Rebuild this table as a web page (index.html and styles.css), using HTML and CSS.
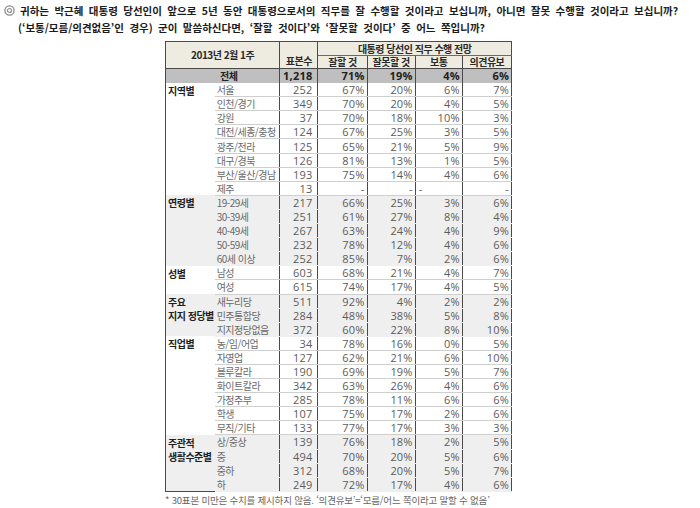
FILE: index.html
```html
<!DOCTYPE html>
<html lang="ko">
<head>
<meta charset="utf-8">
<title>대통령 당선인 직무 수행 전망</title>
<link rel="stylesheet" href="styles.css">
</head>
<body>
<div class="q">
  <div class="q-line">
    <svg class="bullet" width="11" height="11" viewBox="0 0 11 11"><circle cx="5.5" cy="5.5" r="4.6" fill="none" stroke="#8a8a8a" stroke-width="1.3"/><circle cx="5.5" cy="5.5" r="2" fill="none" stroke="#8a8a8a" stroke-width="1.2"/></svg>
    <span>귀하는 박근혜 대통령 당선인이 앞으로 5년 동안 대통령으로서의 직무를 잘 수행할 것이라고 보십니까, 아니면 잘못 수행할 것이라고 보십니까?</span>
  </div>
  <div class="q-line q-line2">(‘보통/모름/의견없음’인 경우) 군이 말씀하신다면, ‘잘할 것이다’와 ‘잘못할 것이다’ 중 어느 쪽입니까?</div>
</div>

<table class="survey">
  <colgroup>
    <col class="c-cat"><col class="c-sub"><col class="c-n"><col class="c-p"><col class="c-p2"><col class="c-p3"><col class="c-p">
  </colgroup>
  <thead>
    <tr class="h1">
      <th colspan="2" rowspan="2" class="h-date">2013년 2월 1주</th>
      <th rowspan="2" class="h-n">표본수</th>
      <th colspan="4" class="h-grp">대통령 당선인 직무 수행 전망</th>
    </tr>
    <tr class="h2">
      <th class="h-p">잘할 것</th><th class="h-p">잘못할 것</th><th class="h-p">보통</th><th class="h-p">의견유보</th>
    </tr>
  </thead>
  <tbody class="tot">
    <tr><td colspan="2" class="tot-l">전체</td><td class="n">1,218</td><td class="p">71%</td><td class="p">19%</td><td class="p">4%</td><td class="p">6%</td></tr>
  </tbody>
  <tbody class="g w">
    <tr><td rowspan="8" class="cat">지역별</td><td class="sub">서울</td><td class="n">252</td><td class="p">67%</td><td class="p">20%</td><td class="p">6%</td><td class="p">7%</td></tr>
    <tr><td class="sub">인천/경기</td><td class="n">349</td><td class="p">70%</td><td class="p">20%</td><td class="p">4%</td><td class="p">5%</td></tr>
    <tr><td class="sub">강원</td><td class="n">37</td><td class="p">70%</td><td class="p">18%</td><td class="p">10%</td><td class="p">3%</td></tr>
    <tr><td class="sub">대전/세종/충청</td><td class="n">124</td><td class="p">67%</td><td class="p">25%</td><td class="p">3%</td><td class="p">5%</td></tr>
    <tr><td class="sub">광주/전라</td><td class="n">125</td><td class="p">65%</td><td class="p">21%</td><td class="p">5%</td><td class="p">9%</td></tr>
    <tr><td class="sub">대구/경북</td><td class="n">126</td><td class="p">81%</td><td class="p">13%</td><td class="p">1%</td><td class="p">5%</td></tr>
    <tr><td class="sub">부산/울산/경남</td><td class="n">193</td><td class="p">75%</td><td class="p">14%</td><td class="p">4%</td><td class="p">6%</td></tr>
    <tr><td class="sub">제주</td><td class="n">13</td><td class="p">-</td><td class="p">-</td><td class="p pl">-</td><td class="p">-</td></tr>
  </tbody>
  <tbody class="g gr">
    <tr><td rowspan="5" class="cat">연령별</td><td class="sub">19-29세</td><td class="n">217</td><td class="p">66%</td><td class="p">25%</td><td class="p">3%</td><td class="p">6%</td></tr>
    <tr><td class="sub">30-39세</td><td class="n">251</td><td class="p">61%</td><td class="p">27%</td><td class="p">8%</td><td class="p">4%</td></tr>
    <tr><td class="sub">40-49세</td><td class="n">267</td><td class="p">63%</td><td class="p">24%</td><td class="p">4%</td><td class="p">9%</td></tr>
    <tr><td class="sub">50-59세</td><td class="n">232</td><td class="p">78%</td><td class="p">12%</td><td class="p">4%</td><td class="p">6%</td></tr>
    <tr><td class="sub">60세 이상</td><td class="n">252</td><td class="p">85%</td><td class="p">7%</td><td class="p">2%</td><td class="p">6%</td></tr>
  </tbody>
  <tbody class="g w">
    <tr><td rowspan="2" class="cat">성별</td><td class="sub">남성</td><td class="n">603</td><td class="p">68%</td><td class="p">21%</td><td class="p">4%</td><td class="p">7%</td></tr>
    <tr><td class="sub">여성</td><td class="n">615</td><td class="p">74%</td><td class="p">17%</td><td class="p">4%</td><td class="p">5%</td></tr>
  </tbody>
  <tbody class="g gr">
    <tr><td rowspan="3" class="cat">주요<br>지지 정당별</td><td class="sub">새누리당</td><td class="n">511</td><td class="p">92%</td><td class="p">4%</td><td class="p">2%</td><td class="p">2%</td></tr>
    <tr><td class="sub">민주통합당</td><td class="n">284</td><td class="p">48%</td><td class="p">38%</td><td class="p">5%</td><td class="p">8%</td></tr>
    <tr><td class="sub">지지정당없음</td><td class="n">372</td><td class="p">60%</td><td class="p">22%</td><td class="p">8%</td><td class="p">10%</td></tr>
  </tbody>
  <tbody class="g w">
    <tr><td rowspan="7" class="cat">직업별</td><td class="sub">농/임/어업</td><td class="n">34</td><td class="p">78%</td><td class="p">16%</td><td class="p">0%</td><td class="p">5%</td></tr>
    <tr><td class="sub">자영업</td><td class="n">127</td><td class="p">62%</td><td class="p">21%</td><td class="p">6%</td><td class="p">10%</td></tr>
    <tr><td class="sub">블루칼라</td><td class="n">190</td><td class="p">69%</td><td class="p">19%</td><td class="p">5%</td><td class="p">7%</td></tr>
    <tr><td class="sub">화이트칼라</td><td class="n">342</td><td class="p">63%</td><td class="p">26%</td><td class="p">4%</td><td class="p">6%</td></tr>
    <tr><td class="sub">가정주부</td><td class="n">285</td><td class="p">78%</td><td class="p">11%</td><td class="p">6%</td><td class="p">6%</td></tr>
    <tr><td class="sub">학생</td><td class="n">107</td><td class="p">75%</td><td class="p">17%</td><td class="p">2%</td><td class="p">6%</td></tr>
    <tr><td class="sub">무직/기타</td><td class="n">133</td><td class="p">77%</td><td class="p">17%</td><td class="p">3%</td><td class="p">3%</td></tr>
  </tbody>
  <tbody class="g gr">
    <tr><td rowspan="4" class="cat">주관적<br>생활수준별</td><td class="sub">상/중상</td><td class="n">139</td><td class="p">76%</td><td class="p">18%</td><td class="p">2%</td><td class="p">5%</td></tr>
    <tr><td class="sub">중</td><td class="n">494</td><td class="p">70%</td><td class="p">20%</td><td class="p">5%</td><td class="p">6%</td></tr>
    <tr><td class="sub">중하</td><td class="n">312</td><td class="p">68%</td><td class="p">20%</td><td class="p">5%</td><td class="p">7%</td></tr>
    <tr><td class="sub">하</td><td class="n">249</td><td class="p">72%</td><td class="p">17%</td><td class="p">4%</td><td class="p">6%</td></tr>
  </tbody>
</table>
<p class="note">* 30표본 미만은 수치를 제시하지 않음. ‘의견유보’=‘모름/어느 쪽이라고 말할 수 없음’</p>
</body>
</html>
```

FILE: styles.css
```css
* { box-sizing: border-box; }

body {
  margin: 0;
  background: #ffffff;
  font-family: "Noto Sans CJK KR", "Noto Sans", sans-serif;
  color: #222222;
}

.q {
  height: 41px;
  padding: 2px 0 0 4px;
  font-size: 10.5px;
  font-weight: 700;
  line-height: 17px;
  color: #1c1c1c;
  word-spacing: 2.5px;
}

.q-line {
  display: flex;
  align-items: center;
  gap: 5px;
  white-space: nowrap;
}

.q-line2 {
  padding-left: 14px;
}

.bullet {
  flex: none;
}

.survey {
  margin-left: 165px;
  width: 347px;
  table-layout: fixed;
  border-collapse: collapse;
  border: 1px solid #4a4a4a;
  font-size: 10px;
  letter-spacing: -0.5px;
}

.c-cat { width: 49px; }
.c-sub { width: 65px; }
.c-n { width: 38px; }
.c-p { width: 49px; }
.c-p2 { width: 48px; }
.c-p3 { width: 47px; }

th, td {
  padding: 0;
  white-space: nowrap;
  overflow: hidden;
}

thead th {
  background: #eeece1;
  color: #2a2a2a;
  font-weight: 700;
  text-align: center;
  line-height: 12px;
}

.h1 { height: 14px; }
.h2 { height: 13px; }

.h-date {
  vertical-align: middle;
  border-right: 1px solid #4a4a4a;
  border-bottom: 1px solid #4a4a4a;
}

.h-n {
  vertical-align: bottom;
  padding-bottom: 1px;
  border-right: 1px solid #4a4a4a;
  border-bottom: 1px solid #4a4a4a;
}

.h-grp {
  border-bottom: 1px solid #6a6a6a;
}

.h-p {
  border-left: 1px solid #4a4a4a;
  border-bottom: 1px solid #4a4a4a;
  vertical-align: middle;
}

tbody tr { height: 14.1px; }

td {
  line-height: 13px;
  vertical-align: middle;
}

.tot td {
  background: #bfbfbf;
  font-weight: 700;
  color: #222222;
}

.tot-l {
  text-align: center;
  padding-left: 12px;
}

.cat {
  vertical-align: top;
  text-align: left;
  padding-left: 2px;
  padding-top: 1px;
  line-height: 14.1px;
  font-weight: 700;
  color: #1e1e1e;
}

.sub {
  padding-left: 2px;
  color: #6a6a6a;
}

.n, .p {
  font-family: "Open Sans", "Noto Sans", sans-serif;
  font-size: 11px;
  letter-spacing: 0.2px;
  text-align: right;
  color: #5c5c5c;
  border-left: 1px solid #4a4a4a;
}

.n { padding-right: 5px; }
.p { padding-right: 2px; }
.p.pl { text-align: left; padding-left: 3px; }

.tot .n, .tot .p { color: #222222; }

.w td { background: #ffffff; }
.w .sub, .w .n, .w .p { border-bottom: 1px solid #cfcfcf; }

.gr td { background: #efefef; }
.gr .sub, .gr .n, .gr .p { border-bottom: 1px solid #efefef; }

.note {
  margin: 2px 0 0 165px;
  font-size: 9.5px;
  line-height: 12px;
  color: #666666;
  letter-spacing: -0.2px;
}
```
